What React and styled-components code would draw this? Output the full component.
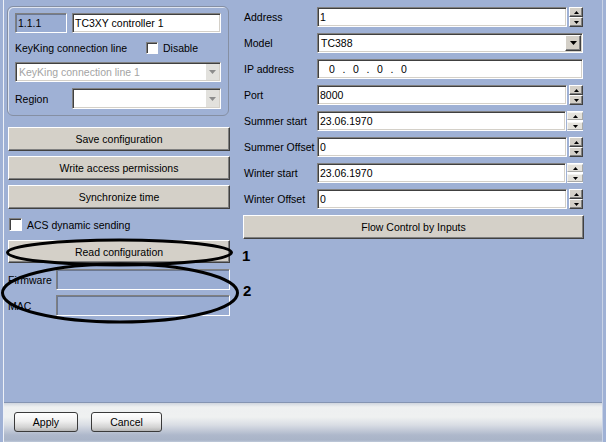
import React from 'react'
import styled, { createGlobalStyle } from 'styled-components'

const GlobalStyle = createGlobalStyle`
  html, body {
    margin: 0;
    padding: 0;
    background: #9fb1d5;
  }
  body {
    font-family: "Liberation Sans", Arial, sans-serif;
    font-size: 10.5px;
    color: #000;
  }
  * { box-sizing: border-box; }
`

const Window = styled.div`
  position: relative;
  width: 606px;
  height: 442px;
  display: flex;
  flex-direction: column;
  background: #9fb1d5;
  overflow: hidden;
`

const Frame = styled.div`
  margin-left: 3px;
  width: 600px;
  flex: 1;
  display: flex;
  flex-direction: column;
  border-left: 1px solid #eef1f7;
  border-right: 1px solid #c9d3e6;
`

const Main = styled.div`
  flex: 1;
  display: flex;
  gap: 13px;
  padding: 6px 0 0 4px;
`

const LeftCol = styled.div`
  width: 222px;
  display: flex;
  flex-direction: column;
`

const RightCol = styled.div`
  width: 340px;
  margin-top: 1px;
  display: flex;
  flex-direction: column;
  gap: 6px;
`

const Group = styled.div`
  margin-left: -1px;
  width: 222px;
  border: 1px solid #858fa3;
  border-radius: 6px;
  box-shadow: inset 1px 1px 0 #dfe5f0;
  padding: 6px 7px 6px 7px;
  display: flex;
  flex-direction: column;
`

const Row = styled.div`
  display: flex;
  align-items: center;
  height: ${p => p.$h || 20}px;
  margin-top: ${p => p.$mt || 0}px;
  gap: ${p => p.$gap || 0}px;
`

const Label = styled.span`
  width: ${p => p.$w}px;
  flex: none;
  white-space: nowrap;
  padding-left: ${p => p.$pl || 0}px;
`

const Field = styled.div`
  flex: ${p => (p.$w ? 'none' : 1)};
  width: ${p => (p.$w ? p.$w + 'px' : 'auto')};
  height: 100%;
  display: flex;
  align-items: center;
  padding: 0 2px;
  background: ${p => (p.$disabled ? '#9aadd3' : '#fff')};
  color: ${p => (p.$grey ? '#a4a4a4' : '#000')};
  border: 1px solid;
  border-color: #808080 #fff #fff #808080;
  box-shadow: ${p =>
    p.$disabled
      ? 'inset 1px 1px 0 #6c7890'
      : 'inset 1px 1px 0 #404040, inset -1px -1px 0 #d4d0c8'};
  white-space: nowrap;
  overflow: hidden;
`

const ComboBox = styled(Field)`
  padding: 1px 1px 1px 3px;
`

const ComboText = styled.span`
  flex: 1;
`

const ArrowBox = styled.div`
  width: ${p => (p.$classic ? 16 : 13)}px;
  height: 100%;
  display: flex;
  align-items: center;
  justify-content: center;
  background: ${p => (p.$classic ? '#d4d0c8' : '#e2e1dd')};
  border: ${p => (p.$classic ? '1px solid' : 'none')};
  border-color: #fff #404040 #404040 #fff;
  box-shadow: ${p => (p.$classic ? 'inset -1px -1px 0 #808080' : 'none')};
`

const Check = styled.span`
  width: ${p => p.$s || 12}px;
  height: ${p => p.$s || 12}px;
  flex: none;
  background: #fff;
  border: 1px solid;
  border-color: #808080 #fff #fff #808080;
  box-shadow: inset 1px 1px 0 #404040;
`

const Button = styled.div`
  height: ${p => p.$h || 24}px;
  margin-top: ${p => p.$mt || 0}px;
  width: ${p => (p.$wide ? 'calc(100% + 1px)' : '100%')};
  display: flex;
  align-items: center;
  justify-content: center;
  background: #d4d0c8;
  border: 1px solid;
  border-color: #fff #404040 #404040 #fff;
  box-shadow: inset -1px -1px 0 #808080;
`

const Spinner = styled.div`
  width: ${p => (p.$flat ? 16 : 14)}px;
  height: 100%;
  margin-left: ${p => (p.$flat ? 1 : 2)}px;
  display: flex;
  flex-direction: column;
  flex: none;
  background: ${p => (p.$flat ? '#fff' : 'transparent')};
  gap: ${p => (p.$flat ? 2 : 0)}px;
  padding: ${p => (p.$flat ? '1px 0' : 0)};
`

const SpinBtn = styled.div`
  flex: 1;
  display: flex;
  align-items: center;
  justify-content: center;
  background: ${p => (p.$flat ? '#e4e2dc' : '#d4d0c8')};
  border: 1px solid;
  border-color: ${p => (p.$flat ? '#f4f4f2 #a9a9a6 #a9a9a6 #f4f4f2' : '#fff #404040 #404040 #fff')};
  box-shadow: ${p => (p.$flat ? 'none' : 'inset -1px -1px 0 #808080')};
`

const IpOctet = styled.span`
  width: 16px;
  text-align: center;
`

const IpDot = styled.span`
  width: 8px;
  text-align: center;
`

const BottomBar = styled.div`
  height: 40px;
  flex: none;
  display: flex;
  gap: 13px;
  padding: 9px 0 0 10px;
  border-top: 1px solid #8494b2;
  background: linear-gradient(
    to bottom,
    #cfd5de 0px,
    #eef0f1 4px,
    #eff1f1 14px,
    #d9dde4 22px,
    #aeb8cb 32px,
    #a9b4c8 37px,
    #bfc9da 39px
  );
`

const XpButton = styled.div`
  width: ${p => p.$w}px;
  height: 20px;
  display: flex;
  align-items: center;
  justify-content: center;
  border: 1px solid #3a3a3a;
  border-radius: 3px;
  background: linear-gradient(to bottom, #ffffff 0%, #f0f0f0 45%, #d2d2d2 80%, #b4b4b4 100%);
`

const Annotation = styled.svg`
  position: absolute;
  left: 0;
  top: 0;
  pointer-events: none;
`

const Marker = styled.span`
  position: absolute;
  left: ${p => p.$x}px;
  top: ${p => p.$y}px;
  font-family: "Liberation Sans", Arial, sans-serif;
  font-weight: bold;
  font-size: 15px;
  line-height: 15px;
`

function Tri({ up, color = '#000', w = 5, h = 3 }) {
  const pts = up ? `0,${h} ${w},${h} ${w / 2},0` : `0,0 ${w},0 ${w / 2},${h}`
  return (
    <svg width={w} height={h} viewBox={`0 0 ${w} ${h}`}>
      <polygon points={pts} fill={color} />
    </svg>
  )
}

function Spin({ flat }) {
  return (
    <Spinner $flat={flat}>
      <SpinBtn $flat={flat}><Tri up /></SpinBtn>
      <SpinBtn $flat={flat}><Tri /></SpinBtn>
    </Spinner>
  )
}

function FormRow({ label, children }) {
  return (
    <Row>
      <Label $w={74} $pl={1}>{label}</Label>
      {children}
    </Row>
  )
}

export default function App() {
  return (
    <Window>
      <GlobalStyle />
      <Frame>
        <Main>
          <LeftCol>
            <Group>
              <Row $gap={5}>
                <Field $w={52} $disabled>1.1.1</Field>
                <Field>TC3XY controller 1</Field>
              </Row>
              <Row $h={29}>
                <Label $w={131}>KeyKing connection line</Label>
                <Check />
                <Label $pl={5}>Disable</Label>
              </Row>
              <Row>
                <ComboBox $grey>
                  <ComboText>KeyKing connection line 1</ComboText>
                  <ArrowBox><Tri w={7} h={4} color="#8c8c8c" /></ArrowBox>
                </ComboBox>
              </Row>
              <Row $h={21} $mt={6}>
                <Label $w={57}>Region</Label>
                <ComboBox>
                  <ComboText />
                  <ArrowBox><Tri w={7} h={4} color="#8c8c8c" /></ArrowBox>
                </ComboBox>
              </Row>
            </Group>

            <Button $mt={11}>Save configuration</Button>
            <Button $mt={5}>Write access permissions</Button>
            <Button $mt={5}>Synchronize time</Button>

            <Row $h={13} $mt={9}>
              <Check $s={13} style={{ marginLeft: 1 }} />
              <Label $pl={5}>ACS dynamic sending</Label>
            </Row>

            <Button $h={23} $mt={9}>Read configuration</Button>

            <Row $h={21} $mt={6}>
              <Label $w={48}>Firmware</Label>
              <Field $disabled />
            </Row>
            <Row $h={21} $mt={5}>
              <Label $w={48}>MAC</Label>
              <Field $disabled />
            </Row>
          </LeftCol>

          <RightCol>
            <FormRow label="Address">
              <Field>1</Field>
              <Spin />
            </FormRow>
            <FormRow label="Model">
              <ComboBox>
                <ComboText>TC388</ComboText>
                <ArrowBox $classic><Tri w={7} h={4} /></ArrowBox>
              </ComboBox>
            </FormRow>
            <FormRow label="IP address">
              <Field style={{ paddingLeft: 6 }}>
                <IpOctet>0</IpOctet><IpDot>.</IpDot>
                <IpOctet>0</IpOctet><IpDot>.</IpDot>
                <IpOctet>0</IpOctet><IpDot>.</IpDot>
                <IpOctet>0</IpOctet>
              </Field>
            </FormRow>
            <FormRow label="Port">
              <Field>8000</Field>
              <Spin />
            </FormRow>
            <FormRow label="Summer start">
              <Field>23.06.1970</Field>
              <Spin flat />
            </FormRow>
            <FormRow label="Summer Offset">
              <Field>0</Field>
              <Spin />
            </FormRow>
            <FormRow label="Winter start">
              <Field>23.06.1970</Field>
              <Spin flat />
            </FormRow>
            <FormRow label="Winter Offset">
              <Field>0</Field>
              <Spin />
            </FormRow>
            <Button $wide>Flow Control by Inputs</Button>
          </RightCol>
        </Main>

        <BottomBar>
          <XpButton $w={64}>Apply</XpButton>
          <XpButton $w={71}>Cancel</XpButton>
        </BottomBar>
      </Frame>

      <Annotation width="260" height="330">
        <ellipse cx="119.5" cy="252.5" rx="112" ry="12.5" fill="none" stroke="#000" strokeWidth="3" />
        <ellipse cx="120" cy="293" rx="117.5" ry="29" fill="none" stroke="#000" strokeWidth="3" />
      </Annotation>
      <Marker $x={242} $y={248}>1</Marker>
      <Marker $x={243} $y={283}>2</Marker>
    </Window>
  )
}
